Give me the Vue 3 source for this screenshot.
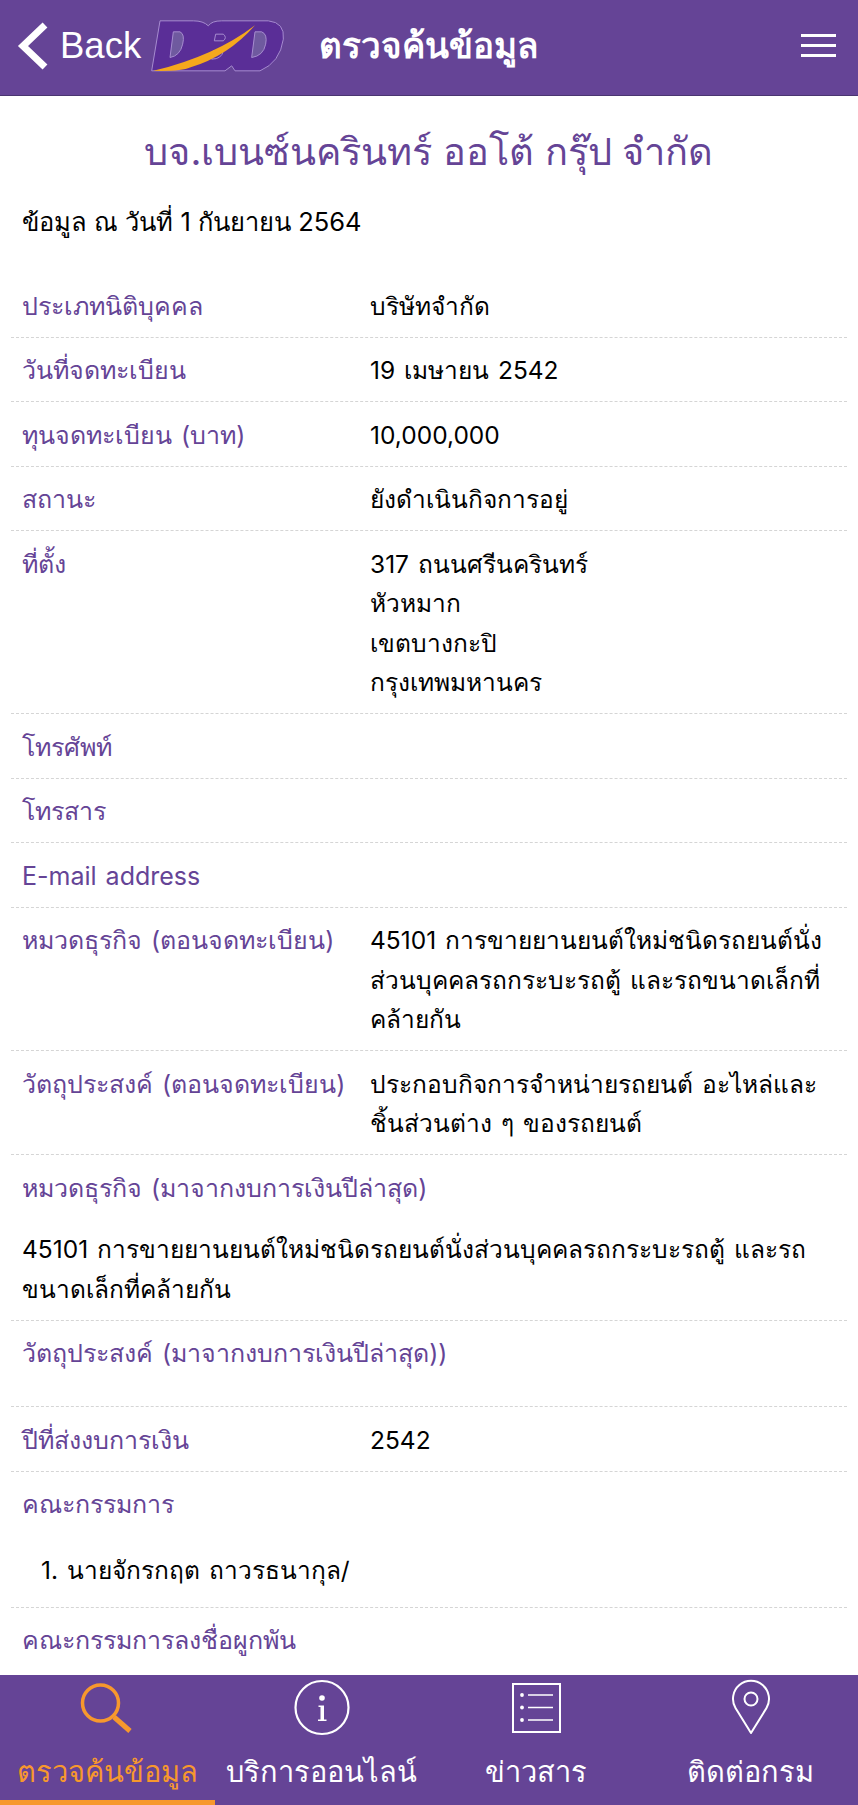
<template>
  <div class="page">
    <header class="topbar">
      <div class="back">
        <svg class="chev" width="32" height="48" viewBox="0 0 32 48"><path d="M28 3 L6 24 L28 45" fill="none" stroke="#fff" stroke-width="7"/></svg>
        <span>Back</span>
      </div>
      <svg class="logo" width="134" height="53" viewBox="65 40 402 158">
        <path d="M95 45 H195 Q225 45 240 60 Q250 45 280 45 H420 Q470 50 465 100 Q455 170 395 195 H320 L310 180 L290 195 H70 Z" fill="#5a2e97" stroke="#a68ccf" stroke-width="3"/>
        <path d="M135 78 H155 Q170 85 163 115 Q155 150 125 155 Z M380 78 H400 Q418 85 412 115 Q405 150 370 155 Z" fill="#6f5a9f" stroke="#a68ccf" stroke-width="3"/>
        <path d="M262 85 H285 Q297 95 285 105 H258 Z M255 135 H285 Q280 160 250 160 Z" fill="none" stroke="#a68ccf" stroke-width="3"/>
        <path d="M75 195 Q260 150 380 58 Q300 150 185 185 Q160 197 75 195 Z" fill="#f5a81c"/>
      </svg>
      <h1 class="top-title">ตรวจค้นข้อมูล</h1>
      <div class="burger"><i></i><i></i><i></i></div>
    </header>

    <main class="content">
      <h2 class="company">บจ.เบนซ์นครินทร์ ออโต้ กรุ๊ป จำกัด</h2>
      <p class="asof">ข้อมูล ณ วันที่ 1 กันยายน 2564</p>
      <div class="info">
        <div v-for="row in rows" :key="row.label" class="row" :class="row.kind">
          <div class="label">{{ row.label }}</div>
          <div class="value">
            <div v-for="line in row.lines" :key="line">{{ line }}</div>
          </div>
        </div>
      </div>
    </main>

    <nav class="tabs">
      <div class="tab active">
        <svg width="60" height="60" viewBox="0 0 60 60"><circle cx="23.5" cy="26" r="18" fill="none" stroke="currentColor" stroke-width="3.5"/><path d="M37 40 L53 54" stroke="currentColor" stroke-width="5"/></svg>
        <span>ตรวจค้นข้อมูล</span>
      </div>
      <div class="tab">
        <svg width="60" height="60" viewBox="0 0 60 60"><circle cx="30" cy="30.5" r="26.5" fill="none" stroke="currentColor" stroke-width="2.2"/><circle cx="30" cy="21" r="2.8" fill="currentColor"/><path d="M26.5 28.5 H32 V42.5 H34.5 V44 H26 V42.5 H28.5 V30 H26.5 Z" fill="currentColor"/></svg>
        <span>บริการออนไลน์</span>
      </div>
      <div class="tab">
        <svg width="60" height="60" viewBox="0 0 60 60"><rect x="7" y="7" width="47" height="48" fill="none" stroke="currentColor" stroke-width="2"/><path d="M22 18 H47 M22 30.5 H47 M22 43 H47" stroke="currentColor" stroke-width="1.6"/><circle cx="16" cy="18" r="1.9" fill="currentColor"/><circle cx="16" cy="30.5" r="1.9" fill="currentColor"/><circle cx="16" cy="43" r="1.9" fill="currentColor"/></svg>
        <span>ข่าวสาร</span>
      </div>
      <div class="tab">
        <svg width="60" height="60" viewBox="0 0 60 60"><path d="M30 56 L14.5 31 A18 18 0 1 1 45.5 31 Z" fill="none" stroke="currentColor" stroke-width="2" stroke-linejoin="round"/><circle cx="30" cy="22" r="6.5" fill="none" stroke="currentColor" stroke-width="2"/></svg>
        <span>ติดต่อกรม</span>
      </div>
    </nav>
  </div>
</template>

<script setup>
const rows = [
  { label: "ประเภทนิติบุคคล", lines: ["บริษัทจำกัด"] },
  { label: "วันที่จดทะเบียน", lines: ["19 เมษายน 2542"] },
  { label: "ทุนจดทะเบียน (บาท)", lines: ["10,000,000"] },
  { label: "สถานะ", lines: ["ยังดำเนินกิจการอยู่"] },
  { label: "ที่ตั้ง", lines: ["317 ถนนศรีนครินทร์", "หัวหมาก", "เขตบางกะปิ", "กรุงเทพมหานคร"] },
  { label: "โทรศัพท์", lines: [] },
  { label: "โทรสาร", lines: [] },
  { label: "E-mail address", lines: [] },
  { label: "หมวดธุรกิจ (ตอนจดทะเบียน)", lines: ["45101 การขายยานยนต์ใหม่ชนิดรถยนต์นั่ง", "ส่วนบุคคลรถกระบะรถตู้ และรถขนาดเล็กที่", "คล้ายกัน"] },
  { label: "วัตถุประสงค์ (ตอนจดทะเบียน)", lines: ["ประกอบกิจการจำหน่ายรถยนต์ อะไหล่และ", "ชิ้นส่วนต่าง ๆ ของรถยนต์"] },
  { label: "หมวดธุรกิจ (มาจากงบการเงินปีล่าสุด)", kind: "stack", lines: ["45101 การขายยานยนต์ใหม่ชนิดรถยนต์นั่งส่วนบุคคลรถกระบะรถตู้ และรถ", "ขนาดเล็กที่คล้ายกัน"] },
  { label: "วัตถุประสงค์ (มาจากงบการเงินปีล่าสุด))", kind: "stack", lines: [] },
  { label: "ปีที่ส่งงบการเงิน", lines: ["2542"] },
  { label: "คณะกรรมการ", kind: "stack list", lines: ["1. นายจักรกฤต ถาวรธนากุล/"] },
  { label: "คณะกรรมการลงชื่อผูกพัน", kind: "stack", lines: [] },
];
</script>

<style>
html, body { margin: 0; background: #fff; }
</style>

<style scoped>
.page {
  width: 858px;
  height: 1805px;
  display: flex;
  flex-direction: column;
  overflow: hidden;
  font-family: Inter, "Noto Sans", "Liberation Sans", sans-serif;
}
.topbar {
  height: 96px;
  flex: none;
  background: #654496;
  border-bottom: 1px solid #4a3570;
  box-sizing: border-box;
  display: flex;
  align-items: center;
  color: #fff;
  padding: 0 22px 4px 17px;
}
.back { display: flex; align-items: center; gap: 11px; font-size: 36.5px; font-family: "Liberation Sans", sans-serif; }
.logo { margin-left: 9px; }
.top-title { margin: 0 0 0 35px; font-size: 35px; font-weight: 700; flex: 1; }
.burger { display: flex; flex-direction: column; gap: 7px; }
.burger i { display: block; width: 35px; height: 3px; background: #fff; }
.content { flex: 1; min-height: 0; overflow: hidden; padding: 0 11px; }
.company { margin: 30px 0 0; text-align: center; font-size: 38px; line-height: 50px; font-weight: 400; color: #654496; }
.asof { margin: 26px 0 0; padding-left: 11px; font-size: 25.5px; line-height: 40px; color: #000; }
.info { margin-top: 31px; }
.row {
  display: flex;
  padding: 13.5px 11px 10.5px;
  border-bottom: 1px dashed #d5d5d5;
  font-size: 24.5px;
  line-height: 39.5px;
  word-spacing: 2px;
}
.row.stack { display: block; }
.label { width: 348px; flex: none; color: #654496; font-size: 25px; white-space: nowrap; }
.value { color: #000; flex: 1; white-space: nowrap; }
.stack .value { padding-top: 22px; }
.list .value { padding: 26px 0 6px 19px; }
.tabs {
  height: 130px;
  flex: none;
  background: #654496;
  display: grid;
  grid-template-columns: repeat(4, 1fr);
  color: #fff;
}
.tab {
  display: flex;
  flex-direction: column;
  align-items: center;
  font-size: 29px;
  padding-top: 2px;
  box-sizing: border-box;
}
.tab span { line-height: 44px; margin-top: 13px; white-space: nowrap; }
.tab.active { color: #f7982d; border-bottom: 5px solid #f7982d; }
</style>
